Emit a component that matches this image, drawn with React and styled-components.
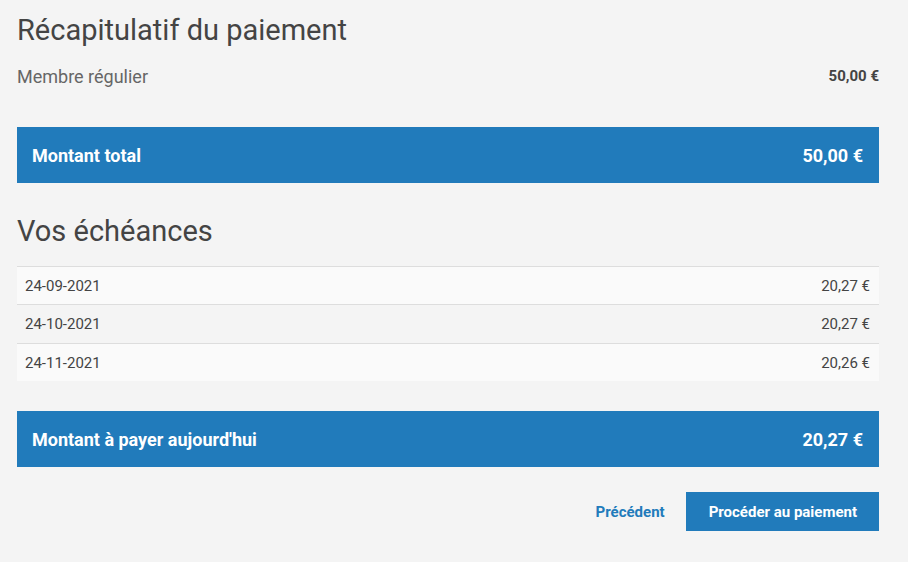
import React from 'react';
import styled, { createGlobalStyle } from 'styled-components';

const GlobalStyle = createGlobalStyle`
  html, body {
    margin: 0;
    padding: 0;
    background: #f4f4f4;
    font-family: Roboto, "Liberation Sans", sans-serif;
  }
`;

const Page = styled.div`
  padding: 11px 29px 30px 17px;
  color: #444;
`;

const Title = styled.h2`
  margin: 0;
  font-size: 29px;
  font-weight: 400;
  line-height: 38px;
  color: #444;
`;

const LineItem = styled.div`
  display: flex;
  justify-content: space-between;
  align-items: center;
  margin-top: 17px;
  height: 20px;
`;

const ItemLabel = styled.span`
  font-size: 18px;
  color: #666;
`;

const ItemValue = styled.span`
  font-size: 15px;
  font-weight: 700;
  color: #444;
`;

const TotalBar = styled.div`
  display: flex;
  justify-content: space-between;
  align-items: center;
  height: 56px;
  padding: 0 16px 0 15px;
  margin-top: ${p => p.$top}px;
  background: #217bbb;
  color: #fff;
  font-size: 18px;
  font-weight: 700;
`;

const SectionTitle = styled(Title)`
  margin-top: 29px;
`;

const Table = styled.div`
  margin-top: 16px;
  border-top: 1px solid #ddd;
`;

const Row = styled.div`
  display: flex;
  justify-content: space-between;
  align-items: center;
  height: 37px;
  padding: 0 9px 0 8px;
  font-size: 15px;
  color: #444;
  background: ${p => (p.$odd ? '#fafafa' : '#f4f4f4')};
  & + & {
    border-top: 1px solid #ddd;
  }
  &:nth-child(2) {
    height: 38px;
  }
`;

const Actions = styled.div`
  display: flex;
  justify-content: flex-end;
  align-items: center;
  gap: 21px;
  margin-top: 25px;
`;

const LinkButton = styled.button`
  background: none;
  border: none;
  padding: 0;
  font-family: inherit;
  font-size: 15px;
  font-weight: 700;
  color: #217bbb;
  cursor: pointer;
`;

const PrimaryButton = styled.button`
  height: 39px;
  padding: 0 22px 0 23px;
  border: none;
  background: #217bbb;
  color: #fff;
  font-family: inherit;
  font-size: 15px;
  font-weight: 700;
  cursor: pointer;
`;

const schedule = [
  { date: '24-09-2021', amount: '20,27 €' },
  { date: '24-10-2021', amount: '20,27 €' },
  { date: '24-11-2021', amount: '20,26 €' },
];

export default function App() {
  return (
    <Page>
      <GlobalStyle />
      <Title>Récapitulatif du paiement</Title>
      <LineItem>
        <ItemLabel>Membre régulier</ItemLabel>
        <ItemValue>50,00 €</ItemValue>
      </LineItem>
      <TotalBar $top={41}>
        <span>Montant total</span>
        <span>50,00 €</span>
      </TotalBar>
      <SectionTitle>Vos échéances</SectionTitle>
      <Table>
        {schedule.map((s, i) => (
          <Row key={s.date} $odd={i % 2 === 0}>
            <span>{s.date}</span>
            <span>{s.amount}</span>
          </Row>
        ))}
      </Table>
      <TotalBar $top={30}>
        <span>Montant à payer aujourd'hui</span>
        <span>20,27 €</span>
      </TotalBar>
      <Actions>
        <LinkButton>Précédent</LinkButton>
        <PrimaryButton>Procéder au paiement</PrimaryButton>
      </Actions>
    </Page>
  );
}
